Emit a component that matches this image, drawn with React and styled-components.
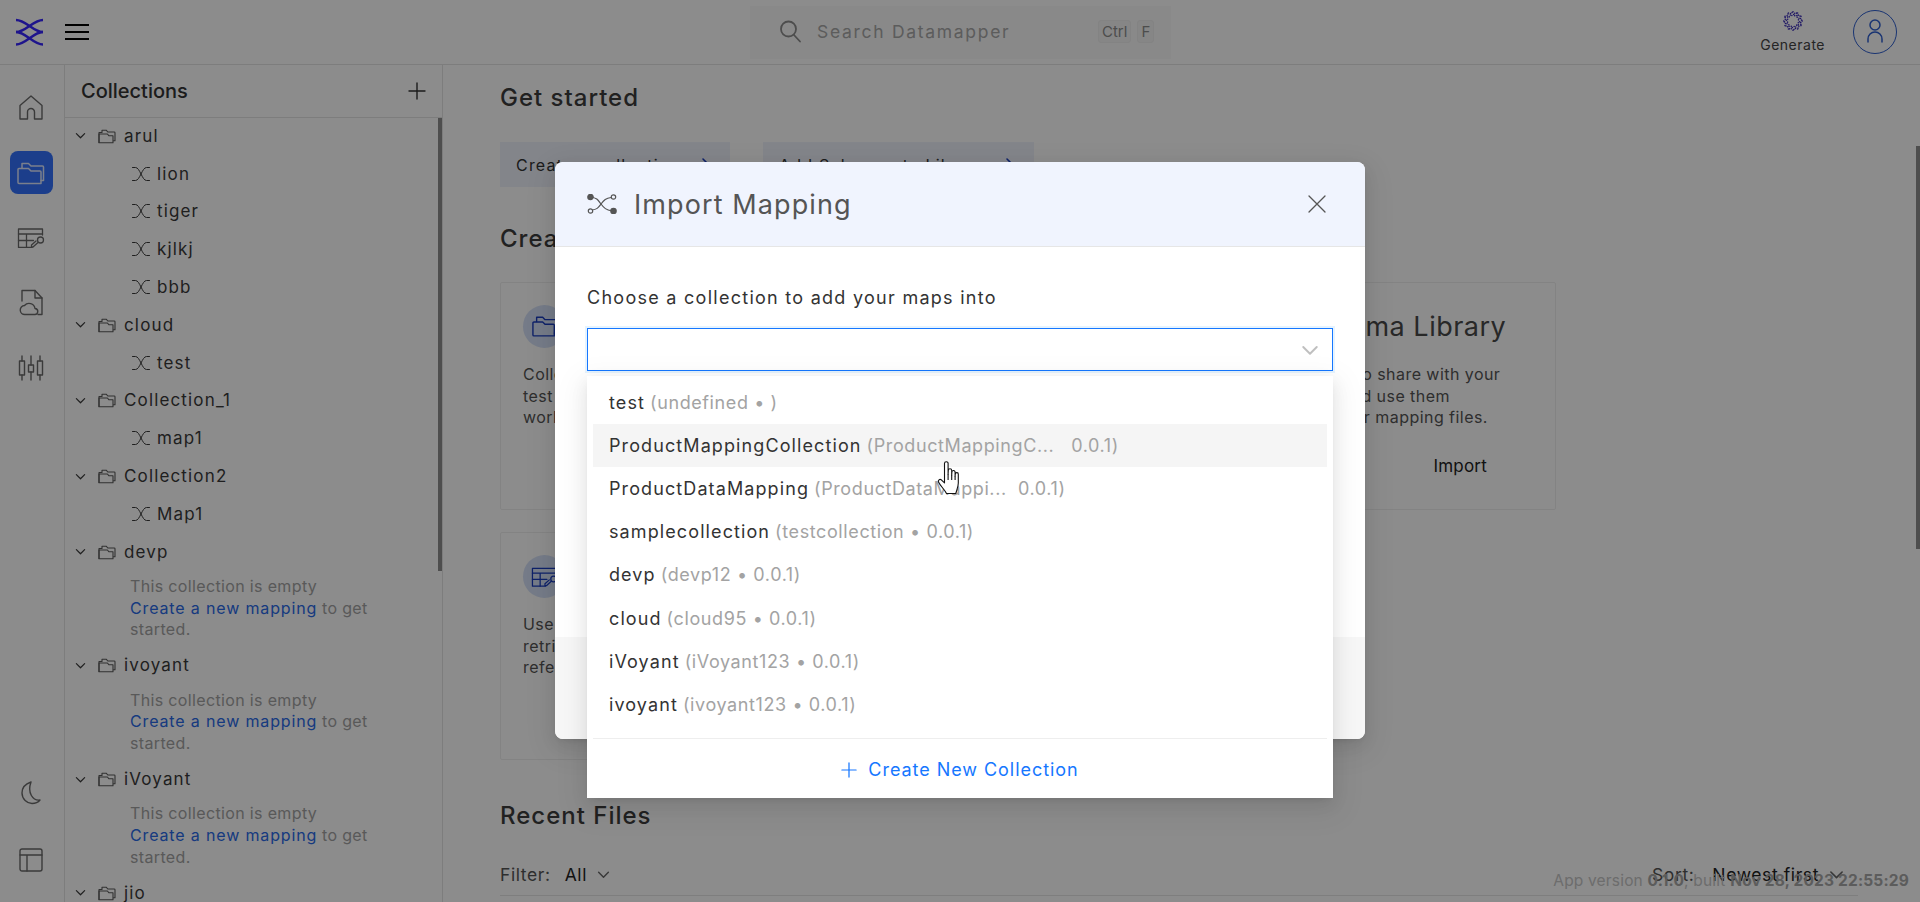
import React from "react";
import styled, { createGlobalStyle } from "styled-components";

const FONT = `"Inter", "Open Sans", "Liberation Sans", sans-serif`;

const Global = createGlobalStyle`
  html, body { margin: 0; padding: 0; height: 902px; overflow: hidden; background: #fff; }
  body { font-family: ${FONT}; color: #1f1f1f; }
  * { box-sizing: border-box; }
`;

const Page = styled.div`
  position: relative;
  width: 1920px;
  height: 902px;
  overflow: hidden;
  display: flex;
  flex-direction: column;
  background: #fff;
`;

const Header = styled.header`
  flex: 0 0 65px;
  border-bottom: 1px solid #e3e3e3;
  display: flex;
  align-items: center;
  padding-left: 16px;
  position: relative;
`;
const Logo = styled.svg`
  width: 28px;
  height: 28px;
`;
const Burger = styled.div`
  margin-left: 21px;
  width: 24px;
  height: 16px;
  display: flex;
  flex-direction: column;
  justify-content: space-between;
  span { display: block; height: 2px; background: #000; }
`;
const SearchBox = styled.div`
  margin-left: 661px;
  width: 421px;
  height: 53px;
  background: #fafafa;
  display: flex;
  align-items: center;
  padding: 0 0 2px 28px;
  color: #8c8c8c;
`;
const SearchText = styled.span`
  margin-left: 15px;
  width: 281px;
  font-size: 17.5px;
  letter-spacing: 1.7px;
  color: #a8a8a8;
`;
const Key = styled.span`
  font-size: 15px;
  color: #8c8c8c;
  border: 1px solid #eee;
  border-radius: 3px;
  padding: 1px 3px;
  margin-right: 6px;
  background: #f5f5f5;
`;
const HeaderRight = styled.div`
  margin-left: auto;
  display: flex;
  align-items: center;
  padding-right: 23px;
`;
const Generate = styled.div`
  display: flex;
  flex-direction: column;
  align-items: center;
  font-size: 14px;
  letter-spacing: .5px;
  gap: 5px;
  color: #444;
  margin-right: 28px;
  margin-top: -1px;
`;
const Avatar = styled.div`
  width: 44px;
  height: 44px;
  border-radius: 50%;
  border: 1.5px solid #2f5fd0;
  display: flex;
  align-items: center;
  justify-content: center;
  color: #2f5fd0;
`;

const Body = styled.div`
  flex: 1;
  display: flex;
  min-height: 0;
`;
const Rail = styled.nav`
  flex: 0 0 65px;
  border-right: 1px solid #e3e3e3;
  display: flex;
  flex-direction: column;
  align-items: center;
  padding: 21px 2px 0 0;
  color: #6b6b6b;
`;
const RailItem = styled.div`
  width: 43px;
  height: 43px;
  margin-bottom: ${p => p.$mb ?? 22}px;
  border-radius: 8px;
  display: flex;
  align-items: center;
  justify-content: center;
  background: ${p => (p.$active ? "#3372fe" : "transparent")};
  color: ${p => (p.$active ? "#dfe8ff" : "inherit")};
`;
const RailSpacer = styled.div`
  flex: 1;
`;

const Sidebar = styled.aside`
  flex: 0 0 378px;
  border-right: 1px solid #e3e3e3;
  display: flex;
  flex-direction: column;
  min-height: 0;
  position: relative;
`;
const SideHead = styled.div`
  flex: 0 0 53px;
  border-bottom: 1px solid #e3e3e3;
  display: flex;
  align-items: center;
  justify-content: space-between;
  padding: 0 16px;
  font-size: 20px;
  font-weight: 500;
  color: #333;
`;
const Thumb = styled.div`
  position: absolute;
  right: ${p => p.$right}px;
  top: ${p => p.$top}px;
  width: 4px;
  height: ${p => p.$h}px;
  background: #8f8f8f;
`;
const Tree = styled.div`
  flex: 1;
  overflow: hidden;
  margin-top: -1px;
`;
const CollectionRow = styled.div`
  height: 37.8px;
  display: flex;
  align-items: center;
  padding-left: 10px;
  font-size: 17px;
  letter-spacing: 1.15px;
  color: #3a3a3a;
`;
const FolderWrap = styled.span`
  margin: 0 8px 0 12px;
  display: flex;
  color: #5a5a5a;
`;
const MapRow = styled.div`
  height: 37.8px;
  display: flex;
  align-items: center;
  padding-left: 67px;
  font-size: 17px;
  letter-spacing: 1.15px;
  color: #3a3a3a;
  gap: 7px;
`;
const Empty = styled.div`
  padding: 5.5px 43px 5.6px 65px;
  font-size: 16px;
  line-height: 21.6px;
  letter-spacing: .35px;
  color: #a3a3a3;
  a { color: #2a6ae8; letter-spacing: .85px; }
`;

const Main = styled.main`
  flex: 1;
  padding: 0 0 0 57px;
  min-width: 0;
  position: relative;
`;
const H2 = styled.h2`
  margin: ${p => p.$m};
  font-size: 24px;
  line-height: 32px;
  font-weight: 500;
  letter-spacing: 1px;
  color: #3d3d3d;
`;
const Buttons = styled.div`
  display: flex;
  gap: 33px;
  margin-top: 28px;
`;
const QuickBtn = styled.div`
  height: 45px;
  display: flex;
  align-items: center;
  justify-content: space-between;
  padding: 0 19px 0 16px;
  width: ${p => p.$w}px;
  background: #eef2fb;
  font-size: 16px;
  letter-spacing: 1.2px;
  color: #333;
  white-space: nowrap;
  svg { color: #1a3dbf; }
`;
const Cards = styled.div`
  display: grid;
  grid-template-columns: repeat(3, 337px);
  grid-auto-rows: 228px;
  gap: 22px 22.5px;
  margin-top: 27px;
`;
const Card = styled.div`
  border: 1px solid #efefef;
  border-radius: 2px;
  padding: 22px 22px;
`;
const CardHead = styled.div`
  display: flex;
  align-items: center;
  gap: 14px;
  font-size: 27px;
  letter-spacing: .5px;
  color: #4a4a4a;
`;
const Circle = styled.div`
  width: 43px;
  height: 43px;
  border-radius: 50%;
  background: #d5e0f7;
  display: flex;
  align-items: center;
  justify-content: center;
  color: #1a3dbf;
  flex: none;
`;
const CardText = styled.p`
  margin: 16px 0 0;
  font-size: 16px;
  line-height: 21.6px;
  letter-spacing: .45px;
  color: #555;
  white-space: pre-line;
`;
const CardAction = styled.div`
  text-align: right;
  margin: 27px 46px 0 0;
  font-size: 17px;
  letter-spacing: .2px;
  color: #222;
`;
const FilterBar = styled.div`
  margin-top: 29px;
  display: flex;
  align-items: center;
  font-size: 17.5px;
  letter-spacing: .6px;
  color: #555;
  width: 1358px;
  height: 27px;
  padding-right: 14px;
`;
const FilterValue = styled.span`
  color: #222;
  margin-left: 14px;
  display: flex;
  align-items: center;
  gap: 10px;
  svg { color: #666; }
`;
const SortLabel = styled.span`
  margin-left: auto;
  margin-right: 4px;
`;
const TableTop = styled.div`
  margin-top: 7px;
  width: 1358px;
  border-top: 1px solid #e5e5e5;
`;
const Version = styled.div`
  position: absolute;
  right: 11px;
  bottom: 12px;
  font-size: 15.5px;
  letter-spacing: .18px;
  color: #c6c6c6;
  b { color: #a8a8a8; }
`;

const Overlay = styled.div`
  position: absolute;
  inset: 0;
  background: rgba(0, 0, 0, 0.45);
`;
const Modal = styled.div`
  position: absolute;
  left: 555px;
  top: 162px;
  width: 810px;
  height: 577px;
  background: #fff;
  border-radius: 8px;
  box-shadow: 0 6px 16px rgba(0,0,0,.08), 0 3px 6px -4px rgba(0,0,0,.12), 0 9px 28px 8px rgba(0,0,0,.05);
  display: flex;
  flex-direction: column;
`;
const ModalHead = styled.div`
  flex: 0 0 85px;
  background: #f0f4fe;
  border-radius: 8px 8px 0 0;
  border-bottom: 1px solid #e6e6e6;
  display: flex;
  align-items: center;
  padding: 0 39px 0 32px;
  gap: 17px;
  font-size: 27px;
  color: #555;
`;
const ModalTitle = styled.span`
  flex: 1;
  letter-spacing: 1.1px;
`;
const ModalBody = styled.div`
  flex: 1;
  padding: 38px 32px 0;
`;
const Label = styled.div`
  font-size: 18px;
  line-height: 26px;
  letter-spacing: 1.27px;
  color: #333;
`;
const Select = styled.div`
  margin-top: 17px;
  height: 43px;
  border: 1px solid #1677ff;
  box-shadow: 0 0 0 2px rgba(5, 145, 255, .1);
  display: flex;
  align-items: center;
  justify-content: flex-end;
  padding-right: 13px;
  color: #bfbfbf;
`;
const ModalFoot = styled.div`
  flex: 0 0 102px;
  background: #f7f7f7;
  border-radius: 0 0 8px 8px;
`;
const Dropdown = styled.div`
  position: absolute;
  left: 32px;
  top: 214px;
  width: 746px;
  height: 422px;
  background: #fff;
  box-shadow: 0 6px 16px rgba(0,0,0,.08), 0 3px 6px -4px rgba(0,0,0,.12), 0 9px 28px 8px rgba(0,0,0,.05);
  padding: 5px 6px 0;
  display: flex;
  flex-direction: column;
`;
const Option = styled.div`
  flex: 0 0 43.1px;
  display: flex;
  align-items: center;
  padding: 0 16px;
  font-size: 18px;
  letter-spacing: 1.1px;
  color: #333;
  white-space: pre;
  background: ${p => (p.$hover ? "#f5f5f5" : "transparent")};
`;
const OptionSub = styled.span`
  color: #a3a3a3;
  margin-left: 5px;
  letter-spacing: .6px;
`;
const Divider = styled.div`
  margin-top: 12px;
  border-top: 1px solid #eee;
`;
const CreateNew = styled.div`
  flex: 1;
  display: flex;
  align-items: center;
  justify-content: center;
  gap: 11px;
  padding-top: 3px;
  color: #1677ff;
  font-size: 18px;
  letter-spacing: .95px;
`;
const Cursor = styled.svg`
  position: absolute;
  left: 937px;
  top: 461px;
  width: 25px;
  height: 34px;
`;

const Stroke = p => (
  <svg width={p.w} height={p.h} viewBox={p.vb} fill="none" stroke="currentColor" strokeWidth={p.sw ?? 1.3} strokeLinecap="round" strokeLinejoin="round">
    {p.children}
  </svg>
);

const Chevron = ({ s = 11 }) => (
  <Stroke w={s} h={s} vb="0 0 12 12" sw={1.3}><path d="M1.5 4l4.5 4.5L10.5 4" /></Stroke>
);
const Arrow = () => (
  <Stroke w={10} h={16} vb="0 0 10 16" sw={1.6}><path d="M2 2l6 6-6 6" /></Stroke>
);
const Plus = ({ s = 18 }) => (
  <Stroke w={s} h={s} vb="0 0 18 18" sw={1.4}><path d="M9 1v16M1 9h16" /></Stroke>
);
const Folder = ({ w = 18, h = 16 }) => (
  <Stroke w={w} h={h} vb="0 0 18 16" sw={1.1}>
    <path d="M1 14.5V4.5h3V2.2h4.2L9.8 4h6.4a.8.8 0 0 1 .8.8v8h-1.5" />
    <path d="M1 6h8.4l1.6 1.8h4v6.9H1z" />
  </Stroke>
);
const BigFolder = ({ s = 28, vb = "0 0 28 24" }) => (
  <Stroke w={s} h={s * 24 / 28} vb={vb} sw={1.5}>
    <path d="M5 7V2.5h6.5L14 5h11.5a1 1 0 0 1 1 1v13.5H24" />
    <path d="M1 21.5V8.5a1 1 0 0 1 1-1h9.5L14 10h9a1 1 0 0 1 1 1v11.5H2a1 1 0 0 1-1-1z" />
  </Stroke>
);
const MapIcon = () => (
  <Stroke w={18} h={16} vb="0 0 18 16" sw={1}>
    <path d="M0.5 1.5h3C8 1.5 10 14.5 14.5 14.5h3" />
    <path d="M0.5 14.5h3C8 14.5 10 1.5 14.5 1.5h3" />
  </Stroke>
);
const TableKey = ({ w = 28, h = 20 }) => (
  <Stroke w={w} h={h} vb="0 0 28 20" sw={1.3}>
    <path d="M15 19.5H1.5V1h24v6" />
    <path d="M1.5 6h24M1.5 12.5h15M9.5 6v13.5" />
    <circle cx="23.5" cy="12" r="3" />
    <path d="M21 14.5l-5 4.5h-1.5v-2l4.5-4" />
  </Stroke>
);
const MapNodes = () => (
  <svg width="30" height="20" viewBox="0 0 30 20" fill="none" stroke="#555" strokeWidth="1.2">
    <path d="M4 3c6 1 7 3 10 7s5 6 11 7" />
    <path d="M5 16c5-.5 6-2 9-6s5-6 10-6.5" />
    <circle cx="3.5" cy="3" r="2.7" fill="#555" />
    <circle cx="26.5" cy="3" r="2.2" fill="#f0f4fe" />
    <circle cx="3.5" cy="17" r="2.2" fill="#f0f4fe" />
    <circle cx="26.5" cy="17" r="2.7" fill="#555" />
  </svg>
);

const dots = Array.from({ length: 60 }, (_, i) => {
  const a = (i / 60) * Math.PI * 2;
  const r = [9.2, 6.6, 7.9, 5.6, 8.6][i % 5];
  return { x: 10 + Math.cos(a) * r, y: 10 + Math.sin(a) * r };
});

const options = [
  ["test", "(undefined • )"],
  ["ProductMappingCollection", "(ProductMappingC...   0.0.1)"],
  ["ProductDataMapping", "(ProductDataMappi...  0.0.1)"],
  ["samplecollection", "(testcollection • 0.0.1)"],
  ["devp", "(devp12 • 0.0.1)"],
  ["cloud", "(cloud95 • 0.0.1)"],
  ["iVoyant", "(iVoyant123 • 0.0.1)"],
  ["ivoyant", "(ivoyant123 • 0.0.1)"],
];

const tree = [
  { name: "arul", maps: ["lion", "tiger", "kjlkj", "bbb"] },
  { name: "cloud", maps: ["test"] },
  { name: "Collection_1", maps: ["map1"] },
  { name: "Collection2", maps: ["Map1"] },
  { name: "devp", maps: [] },
  { name: "ivoyant", maps: [] },
  { name: "iVoyant", maps: [] },
  { name: "jio", maps: null },
];

export default function App() {
  return (
    <Page>
      <Global />
      <Header>
        <Logo viewBox="0 0 28 28" fill="none" stroke="#3826ff" strokeWidth="2.4">
          <path d="M0 2C10 2 17 14 27 14" />
          <path d="M27 2C17 2 10 14 0 14" />
          <path d="M27 14C17 14 10 26.5 0 26.5" />
          <path d="M0 14C10 14 17 26.5 27 26.5" />
        </Logo>
        <Burger><span /><span /><span /></Burger>
        <SearchBox>
          <Stroke w={24} h={24} vb="0 0 24 24" sw={1.8}>
            <circle cx="10.5" cy="10" r="7.5" /><path d="M16 16l6 6.5" />
          </Stroke>
          <SearchText>Search Datamapper</SearchText>
          <Key>Ctrl</Key><Key>F</Key>
        </SearchBox>
        <HeaderRight>
          <Generate>
            <svg width="20" height="20" viewBox="0 0 20 20">
              {dots.map((d, i) => <circle key={i} cx={d.x} cy={d.y} r="0.8" fill="#3a2bb8" />)}
            </svg>
            Generate
          </Generate>
          <Avatar>
            <Stroke w={18} h={26} vb="0 0 18 26" sw={1.5}>
              <circle cx="9" cy="6" r="5" />
              <path d="M2 23v-3a7 7 0 0 1 14 0v3" />
            </Stroke>
          </Avatar>
        </HeaderRight>
      </Header>
      <Body>
        <Rail>
          <RailItem>
            <Stroke w={24} h={26} vb="0 0 24 26" sw={1.4}>
              <path d="M1 24V10.5L12 1l11 9.5V24H15.5v-7a3.5 3.5 0 0 0-7 0v7z" />
            </Stroke>
          </RailItem>
          <RailItem $active><BigFolder /></RailItem>
          <RailItem>
            <TableKey />
          </RailItem>
          <RailItem>
            <Stroke w={24} h={27} vb="0 0 24 27" sw={1.4}>
              <path d="M3 12V1.5h13l7 7.5v16.5h-4" />
              <path d="M16 1.5V9h7" />
              <path d="M6 25.5a4.5 4.5 0 0 1-.5-9 6 6 0 0 1 10.5 3 3 3 0 0 1-.5 6z" />
            </Stroke>
          </RailItem>
          <RailItem>
            <Stroke w={26} h={26} vb="0 0 26 26" sw={1.4}>
              <path d="M4 1v5M4 20v5M13 1v9M13 17v8M22 1v5M22 20v5" />
              <rect x="1.5" y="6" width="5" height="14" />
              <rect x="10.5" y="10" width="5" height="7" />
              <rect x="19.5" y="6" width="5" height="14" />
            </Stroke>
          </RailItem>
          <RailSpacer />
          <RailItem $mb={24}>
            <Stroke w={22} h={24} vb="0 0 22 24" sw={1.4}>
              <path d="M11 1C5 3 2 7.5 2 12c0 6 5 10.5 10 10.5 3 0 6-1 8-3.5C13 20 7 12 11 1z" />
            </Stroke>
          </RailItem>
          <RailItem $mb={21}>
            <Stroke w={24} h={24} vb="0 0 24 24" sw={1.4}>
              <rect x="1" y="1" width="22" height="22" rx="2" />
              <path d="M1 7h22M8 7v16" />
            </Stroke>
          </RailItem>
        </Rail>
        <Sidebar>
          <SideHead>Collections<Plus /></SideHead>
          <Thumb $right={0} $top={53} $h={453} />
          <Tree>
            {tree.map(c => (
              <React.Fragment key={c.name}>
                <CollectionRow>
                  <Chevron />
                  <FolderWrap><Folder /></FolderWrap>
                  {c.name}
                </CollectionRow>
                {c.maps && c.maps.map(m => (
                  <MapRow key={m}><MapIcon />{m}</MapRow>
                ))}
                {c.maps && c.maps.length === 0 && (
                  <Empty>
                    This collection is empty<br />
                    <a>Create a new mapping</a> to get started.
                  </Empty>
                )}
              </React.Fragment>
            ))}
          </Tree>
        </Sidebar>
        <Main>
          <Thumb $right={0} $top={81} $h={403} />
          <H2 $m="17px 0 0">Get started</H2>
          <Buttons>
            <QuickBtn $w={230}>Create a collection <Arrow /></QuickBtn>
            <QuickBtn $w={271}>Add Schemas to Library <Arrow /></QuickBtn>
          </Buttons>
          <H2 $m="36px 0 0">Create</H2>
          <Cards>
            <Card>
              <Circle><BigFolder s={26} /></Circle>
              <CardText>{"Collections let you group and\ntest your maps and share your\nwork with others."}</CardText>
            </Card>
            <Card />
            <Card>
              <CardHead><Circle /><span>Schema Library</span></CardHead>
              <CardText>{"Add Schemas to share with your\nother teams and use them\ndirectly via your mapping files."}</CardText>
              <CardAction>Import</CardAction>
            </Card>
            <Card>
              <Circle><TableKey w={27} h={20} /></Circle>
              <CardText>{"Use lookup tables to\nretrieve values and\nreference data."}</CardText>
            </Card>
          </Cards>
          <H2 $m="40px 0 0">Recent Files</H2>
          <FilterBar>
            Filter:
            <FilterValue>All <Chevron s={13} /></FilterValue>
            <SortLabel>Sort:</SortLabel>
            <FilterValue>Newest first <Chevron s={15} /></FilterValue>
          </FilterBar>
          <TableTop />
          <Version>App version <b>0.1.0</b>, built <b>Nov 28, 2023 22:55:29</b></Version>
        </Main>
      </Body>
      <Overlay />
      <Modal>
        <ModalHead>
          <MapNodes />
          <ModalTitle>Import Mapping</ModalTitle>
          <Stroke w={18} h={18} vb="0 0 18 18" sw={1.3}><path d="M1 1l16 16M17 1L1 17" /></Stroke>
        </ModalHead>
        <ModalBody>
          <Label>Choose a collection to add your maps into</Label>
          <Select><Chevron s={18} /></Select>
        </ModalBody>
        <ModalFoot />
        <Dropdown>
          {options.map((o, i) => (
            <Option key={o[0]} $hover={i === 1}>{o[0]}<OptionSub>{o[1]}</OptionSub></Option>
          ))}
          <Divider />
          <CreateNew><Plus s={16} />Create New Collection</CreateNew>
        </Dropdown>
      </Modal>
      <Cursor viewBox="0 0 25 34" fill="#fff" stroke="#111" strokeWidth="1.1" strokeLinejoin="round">
        <path d="M7.5 2.5a1.8 1.8 0 0 1 3.6 0V13l.2-3.500a1.700 1.700 0 0 1 3.400 0V14l.2-3a1.600 1.600 0 0 1 3.200.2V15l.2-2a1.500 1.500 0 0 1 3 .2V22c0 4-1.500 7-2.500 10.500H9.500C8 29 3 24.500 1.500 21c-.8-1.800 1.200-3.300 2.800-2.200l3.200 3z" />
        <path d="M11.1 13v6M14.7 14v5M18.1 15v4" />
      </Cursor>
    </Page>
  );
}
